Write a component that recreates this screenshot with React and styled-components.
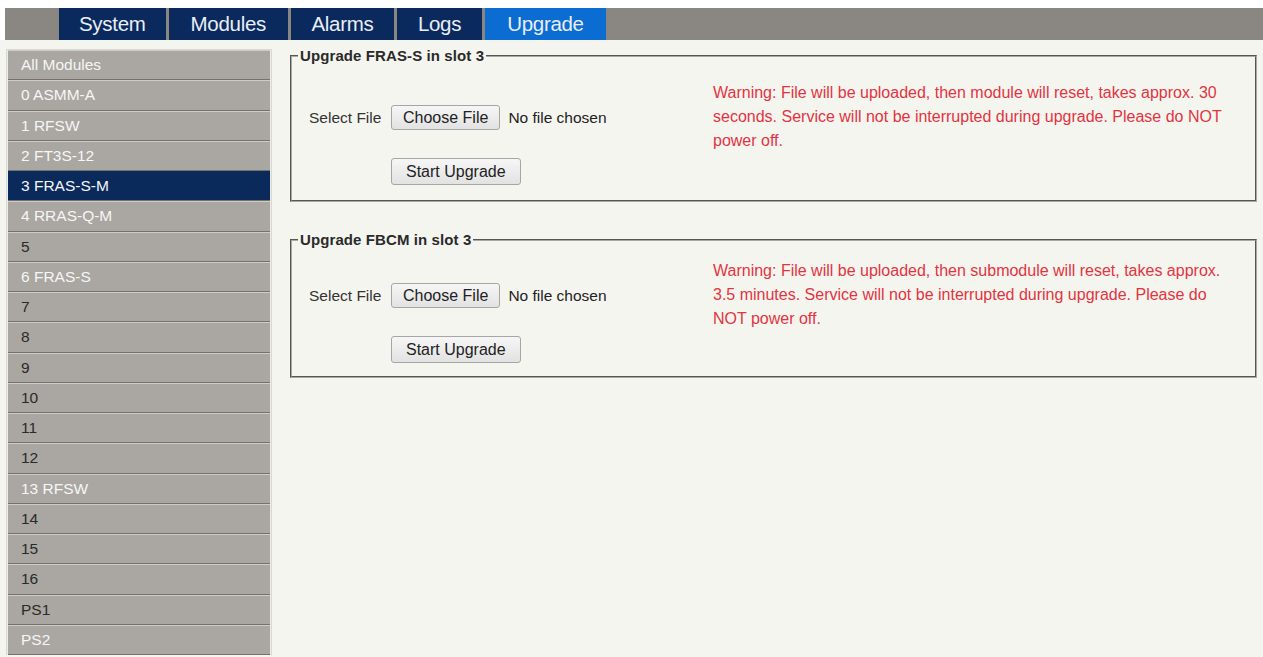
import React from "react";
import styled, { createGlobalStyle } from "styled-components";

const Global = createGlobalStyle`
  html, body {
    margin: 0;
    padding: 0;
    background: #ffffff;
    overflow: hidden;
  }
  body {
    font-family: "Liberation Sans", Arial, sans-serif;
    color: #2b2b2b;
  }
`;

const Page = styled.div`
  padding-top: 8px;
  height: 657px;
  box-sizing: border-box;
  display: flex;
  flex-direction: column;
`;

const TopBar = styled.nav`
  margin-left: 5px;
  height: 32px;
  background: #8a8682;
  display: flex;
  gap: 3px;
  padding-left: 54px;
  flex-shrink: 0;
`;

const Tab = styled.a`
  display: flex;
  align-items: center;
  padding: 0 ${(p) => p.$pad || 20}px;
  background: ${(p) => (p.$active ? "#0b6cd2" : "#0a2a5d")};
  color: #e9eef6;
  font-size: 20.5px;
  letter-spacing: -0.3px;
  text-decoration: none;
  cursor: pointer;
`;

const Body = styled.div`
  flex: 1;
  background: #f5f5f0;
  display: flex;
  align-items: flex-start;
  padding: 9px 6px 0 6px;
  min-height: 0;
`;

const Sidebar = styled.ul`
  list-style: none;
  margin: 0;
  padding: 0 1px;
  width: 266px;
  box-sizing: border-box;
  border-left: 1px solid #d8d8d4;
  border-right: 1px solid #d8d8d4;
  border-top: 1px solid #d8d8d4;
  background: #ecebe7;
  flex-shrink: 0;
`;

const ModuleRow = styled.li`
  height: 30.25px;
  box-sizing: border-box;
  display: flex;
  align-items: center;
  padding-left: 13px;
  font-size: 15.5px;
  background: ${(p) => (p.$selected ? "#0b2a5c" : "#aaa6a1")};
  color: ${(p) => (p.$selected || p.$filled ? "#f6f6f6" : "#2a2a2a")};
  border-top: 1px solid ${(p) => (p.$selected ? "#0b2a5c" : "#cfccc8")};
  border-bottom: 1px solid #75716d;
  cursor: pointer;
`;

const Main = styled.main`
  flex: 1;
  margin-left: 18px;
  margin-top: -2px;
  display: flex;
  flex-direction: column;
  gap: 29px;
`;

const Box = styled.fieldset`
  margin: 0;
  border: 2px groove #a9a9a5;
  padding: ${(p) => p.$top}px 0 ${(p) => p.$bottom}px 17px;
  min-width: 0;
`;

const Title = styled.legend`
  font-size: 15px;
  font-weight: bold;
  color: #2a2a2a;
  padding: 0 2px;
  margin-left: -11px;
  letter-spacing: 0.1px;
`;

const Content = styled.div`
  display: flex;
  align-items: flex-start;
`;

const Form = styled.div`
  width: 404px;
  flex-shrink: 0;
  margin-top: 24px;
  display: grid;
  grid-template-columns: 82px auto;
  row-gap: 28px;
  align-items: center;
`;

const Label = styled.span`
  font-size: 15.5px;
  color: #333;
`;

const Controls = styled.div`
  display: flex;
  align-items: center;
  gap: 8px;
  grid-column: ${(p) => (p.$solo ? "2" : "auto")};
`;

const Button = styled.button`
  height: ${(p) => p.$h}px;
  padding: 0 ${(p) => p.$pad}px;
  font-family: "Liberation Sans", Arial, sans-serif;
  font-size: 16px;
  color: #222;
  background: linear-gradient(#f6f6f6, #e2e2e2);
  border: 1px solid #a6a6a6;
  border-radius: 3px;
  cursor: pointer;
`;

const FileName = styled.span`
  font-size: 15.5px;
  color: #222;
`;

const Warning = styled.p`
  margin: 0;
  width: 520px;
  font-size: 16px;
  line-height: 24px;
  color: #e2343f;
`;

const modules = [
  { name: "All Modules", filled: true },
  { name: "0 ASMM-A", filled: true },
  { name: "1 RFSW", filled: true },
  { name: "2 FT3S-12", filled: true },
  { name: "3 FRAS-S-M", filled: true, selected: true },
  { name: "4 RRAS-Q-M", filled: true },
  { name: "5" },
  { name: "6 FRAS-S", filled: true },
  { name: "7" },
  { name: "8" },
  { name: "9" },
  { name: "10" },
  { name: "11" },
  { name: "12" },
  { name: "13 RFSW", filled: true },
  { name: "14" },
  { name: "15" },
  { name: "16" },
  { name: "PS1" },
  { name: "PS2", filled: true },
];

const tabs = [
  { name: "System", pad: 20 },
  { name: "Modules", pad: 22 },
  { name: "Alarms", pad: 20.5 },
  { name: "Logs", pad: 21 },
  { name: "Upgrade", pad: 22 },
].map((t) => ({ ...t, active: t.name === "Upgrade" }));

const sections = [
  {
    title: "Upgrade FRAS-S in slot 3",
    top: 17,
    bottom: 15,
    warning:
      "Warning: File will be uploaded, then module will reset, takes approx. 30 seconds. Service will not be interrupted during upgrade. Please do NOT power off.",
  },
  {
    title: "Upgrade FBCM in slot 3",
    top: 11,
    bottom: 13,
    warning:
      "Warning: File will be uploaded, then submodule will reset, takes approx. 3.5 minutes. Service will not be interrupted during upgrade. Please do NOT power off.",
  },
];

function UpgradeBox({ title, top, bottom, warning }) {
  return (
    <Box $top={top} $bottom={bottom}>
      <Title>{title}</Title>
      <Content>
        <Form>
          <Label>Select File</Label>
          <Controls>
            <Button $h={25} $pad={11}>Choose File</Button>
            <FileName>No file chosen</FileName>
          </Controls>
          <Controls $solo>
            <Button $h={27} $pad={14}>Start Upgrade</Button>
          </Controls>
        </Form>
        <Warning>{warning}</Warning>
      </Content>
    </Box>
  );
}

export default function App() {
  return (
    <Page>
      <Global />
      <TopBar>
        {tabs.map((t) => (
          <Tab key={t.name} $active={t.active} $pad={t.pad}>
            {t.name}
          </Tab>
        ))}
      </TopBar>
      <Body>
        <Sidebar>
          {modules.map((m) => (
            <ModuleRow key={m.name} $filled={m.filled} $selected={m.selected}>
              {m.name}
            </ModuleRow>
          ))}
        </Sidebar>
        <Main>
          {sections.map((s) => (
            <UpgradeBox key={s.title} {...s} />
          ))}
        </Main>
      </Body>
    </Page>
  );
}
